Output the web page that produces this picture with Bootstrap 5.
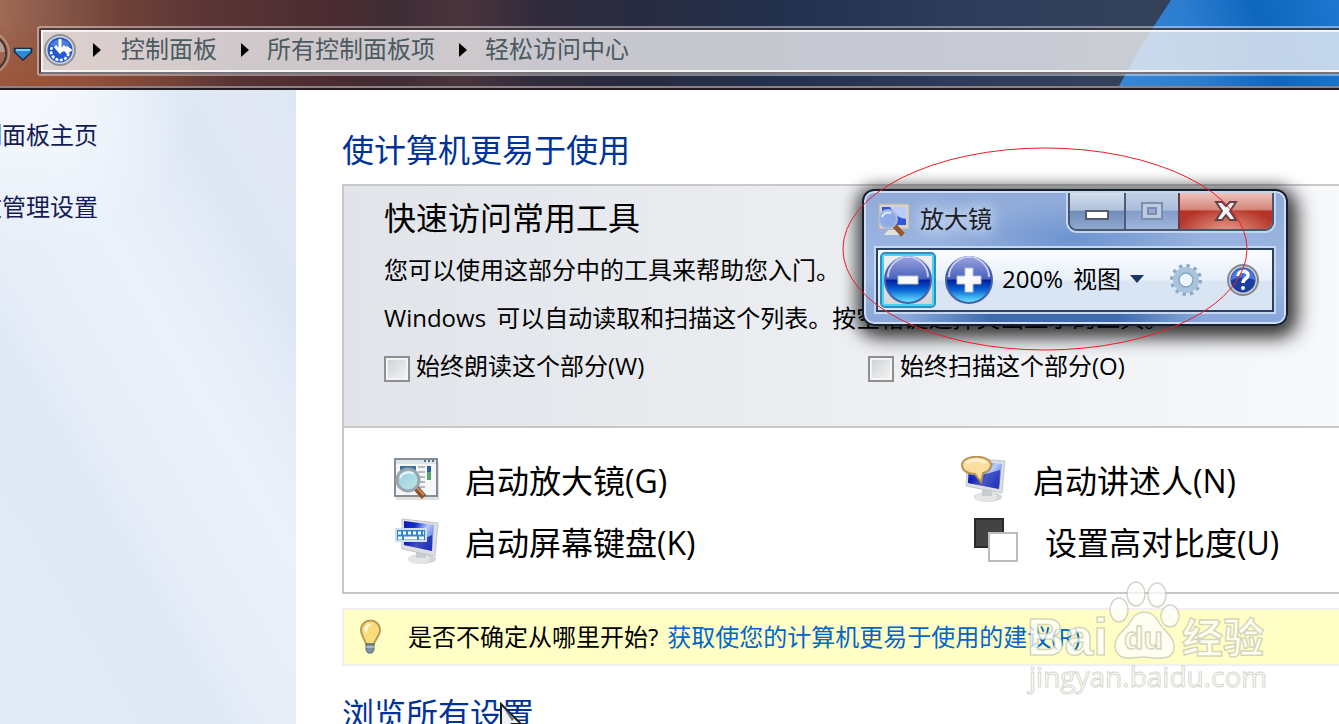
<!DOCTYPE html>
<html lang="zh-CN">
<head>
<meta charset="utf-8">
<meta name="viewport" content="width=device-width, initial-scale=1">
<title>轻松访问中心</title>
<link href="https://cdn.jsdelivr.net/npm/bootstrap@5.3.0/dist/css/bootstrap.min.css" rel="stylesheet">
<style>
  body { font-family: "Open Sans", "Noto Sans CJK SC", sans-serif; font-size: 24px; line-height: 48px; color: #000; background: #fff; }
  a { text-decoration: none; }
  .fs-title { font-size: 32px; line-height: 48px; }
  .ink-blue { color: #003399; }

  /* window frame */
  .glass { height: 90px; padding-top: 26px; border-bottom: 2px solid #231a22; box-shadow: inset 0 -2px #8d8283;
    background: radial-gradient(ellipse 200px 70px at 40px 90px, #9a5236 0, #9a523600), linear-gradient(90deg, #a06a54 0, #8a5a4a 50px, #6f4238 120px, #5c3636 200px, #4c2c30 320px, #3f2d35 400px, #4a343c 460px, #302b3c 540px, #272b40 640px, #22324f 800px, #2c3c5a 960px, #33415b 1120px); }
  .sky { width: 220px; height: 86px; background: linear-gradient(75deg, #3787d6 0, #2c7dd0 35%, #0e66bd 65%, #1e78cf 100%); clip-path: polygon(52px 0, 100% 0, 100% 100%, 0 100%, 24px 50%); }
  .addr { height: 50px; margin-left: 37px; border: 2px solid #ffffff66; border-right: 0; border-radius: 3px 0 0 3px; }
  .addr-in { height: 46px; border: 2px solid #40363ccc; border-bottom-color: #77737b; border-right: 0; border-radius: 2px 0 0 2px; }
  .addr-field { height: 42px; border: 2px solid #f6f3f3; border-right: 0; background: #efeff1cc; padding-bottom: 2px; }
  .addr a { color: #4b5a60; line-height: 36px; padding-bottom: 2px; }
  .addr a:first-of-type { margin-left: 20px; }
  .addr a:not(:first-of-type) { margin-left: 18px; }
  .sep { width: 8px; height: 14px; background: #000; clip-path: polygon(0 0, 100% 50%, 0 100%); }
  .nav-back { top: 30px; left: 0; }

  /* task pane */
  .side { flex: 0 0 296px; padding-top: 21px; background:
      radial-gradient(ellipse 180px 160px at 20px 0, #f7f9fe 0, #f7f9fe00),
      linear-gradient(60deg, #e2ecf8 0, #dee9f6 34%, #e6edf8 41%, #e9f1fa 60%, #e6edf8 70%, #dce7f4 81%, #e2e9f5 90%, #dde7f4 100%); }
  .side a { color: #151c55; margin-left: -46px; white-space: nowrap; margin-bottom: 24px; }

  /* content */
  .content { padding: 36px 0 0 46px; white-space: nowrap; }
  .quick { border: 2px solid #c8c8c8; border-right: 0; margin-top: 10px; }
  .quick-head { height: 242px; padding: 8px 0 0 40px; border-bottom: 2px solid #c8c8c8; background: linear-gradient(90deg, #e1e4e9 0, #ebedf1 460px, #f8f9fb 990px); }
  .half { flex: 0 0 484px; }
  .form-check-input.box { width: 26px; height: 26px; margin: 5px 2px 0 0; border: 2px solid #8e8f8f; border-radius: 0; background: linear-gradient(135deg, #cbcfd5, #f6f6f6) padding-box; box-shadow: inset 0 0 0 2px #f4f4f4; }
  .tools { height: 164px; padding: 22px 0 0 48px; }
  .tools a { color: #000; line-height: 62px; font-size: 32px; }
  .tools .tool-col { flex: 0 0 568px; }
  .tools svg { width: 48px; height: 48px; margin-right: 25px; margin-bottom: 2px; flex: none; }
  .tip { height: 58px; margin-top: 14px; background: #ffffc5; border: 2px solid #f0f0f0; border-right: 0; padding-left: 14px; }
  .tip svg { margin-right: 26px; }
  .tip a { color: #0066cc; margin-left: 9px; }

  /* magnifier window */
  .mag { top: 189px; left: 862px; width: 426px; height: 137px; border: 2px solid #17202e; border-radius: 12px;
    background: radial-gradient(ellipse 130px 40px at 210px 48px, #6d93cf, #6d93cf00), linear-gradient(90deg, #3d6bad00 10%, #3d6bad 30%, #3d6bad 60%, #3d6bad00 80%) 0 122px / 100% 10px no-repeat, linear-gradient(#90abd9, #9db8e2 60%, #87a7d9);
    box-shadow: inset 0 0 0 2px #cfdef3, 0 4px 16px 6px #0009, 8px 8px 22px 2px #0007; padding: 2px 12px 0; font-size: 24px; }
  .mag-bar { height: 55px; }
  .mag-name { line-height: 52px; text-shadow: 0 0 12px #dce7f8, 0 0 16px #dce7f8; color: #1a1e28; }
  .caps { height: 38px; border: 2px solid #48566e; border-top: 0; border-radius: 0 0 9px 9px; overflow: hidden; box-shadow: 0 0 0 2px #c4d5ee; }
  .caps button { border: 0; border-right: 2px solid #4e5d77; padding: 0; height: 36px; background: linear-gradient(#d3ddeb 0, #b0c2dc 48%, #6f8bb8 50%, #90a9cf); display: flex; align-items: center; justify-content: center; }
  .caps .cap-min { width: 56px; }
  .caps .cap-max { width: 54px; background: linear-gradient(#c1cfe4, #a9bedd 48%, #829cc7 50%, #a0b6da); border-right-color: #74383c; }
  .caps .cap-x { width: 92px; border: 0; background: radial-gradient(ellipse 50px 26px at 50% 110%, #e9a18d, #e9a18d00), linear-gradient(#edc4bc 0, #d6847a 46%, #b53326 50%, #b2382d 100%); }
  .mag-body { height: 64px; border: 2px solid #2c4160; box-shadow: 0 0 0 2px #c6d8f0; background: linear-gradient(#fafdff, #e8eff9 50%, #dae5f4 52%, #dae5f4); padding-left: 2px; }
  .mag-body button { border: 0; padding: 0; background: none; color: #000; line-height: 54px; }
  .mag-body span { line-height: 54px; padding-bottom: 2px; }
  .mag-body .btn-out { width: 56px; height: 56px; border: 2px solid #318dbd; border-radius: 5px; box-shadow: inset 0 0 0 2px #46d5f7; background: linear-gradient(#f0f0f0, #d4d4d4); display: flex; align-items: center; justify-content: center; }
  .mag-body .btn-view { margin-left: 10px; padding-bottom: 2px; }
  .ring { left: 842px; top: 146px; pointer-events: none; }
  .stamp { left: 1020px; top: 574px; pointer-events: none; }
  .pointer { left: 499px; top: 702px; }
</style>
</head>
<body>
<div class="vh-100 overflow-hidden position-relative d-flex flex-column">

  <header class="glass position-relative flex-shrink-0">
    <div class="sky position-absolute top-0 end-0"></div>
    <svg class="nav-back position-absolute" width="36" height="46" viewBox="0 0 36 46" aria-hidden="true">
      <circle cx="-12" cy="23" r="21" fill="none" stroke="#c0a298" stroke-width="2" opacity=".7"/>
      <circle cx="-12" cy="23" r="18" fill="#b89a8e" stroke="#3c3432" stroke-width="2"/>
      <path d="M-6 22H5L3 32L-2 36H-6z" fill="#9a644d"/>
      <path d="M14.500 18.500H31.500V22L23 30L14.500 22z" fill="#2a8cd8" stroke="#1b2b42" stroke-width="1.500"/>
      <path d="M16 20H30" stroke="#79d3f5" stroke-width="2"/>
    </svg>
    <div class="addr position-relative">
      <div class="addr-in">
        <nav class="addr-field d-flex align-items-center" aria-label="地址">
          <svg width="34" height="34" viewBox="0 0 34 34" aria-hidden="true">
            <circle cx="17" cy="17" r="15" fill="#d5d8dc" stroke="#8e9297" stroke-width="2"/>
            <circle cx="17" cy="17" r="12.500" fill="#2557cf"/>
            <path d="M7 12a11 9 0 0 1 20 0q-9 4-20 0" fill="#6e97ea" opacity=".6"/>
            <path d="M9 14a9 9 0 1 0 16 0" fill="none" stroke="#fff" stroke-width="2.500" stroke-dasharray="3 1.500"/>
            <path d="M17 6v11M12 13l5 6 5-6M17 17h9M23 14l4 3-4 3" fill="none" stroke="#fff" stroke-width="3"/>
          </svg>
          <span class="sep ms-3"></span>
          <a href="#">控制面板</a>
          <span class="sep ms-4"></span>
          <a href="#">所有控制面板项</a>
          <span class="sep ms-4"></span>
          <a href="#">轻松访问中心</a>
        </nav>
      </div>
    </div>
  </header>

  <div class="d-flex flex-grow-1">
    <nav class="side d-flex flex-column">
      <a href="#">控制面板主页</a>
      <a href="#">更改管理设置</a>
    </nav>

    <main class="content flex-grow-1 overflow-hidden">
      <h1 class="fs-title ink-blue fw-normal m-0">使计算机更易于使用</h1>

      <section class="quick">
        <div class="quick-head">
          <h2 class="fs-title fw-normal mb-1">快速访问常用工具</h2>
          <p class="m-0">您可以使用这部分中的工具来帮助您入门。</p>
          <p class="m-0"><span class="me-1">Windows</span> 可以自动读取和扫描这个列表。按空格键选择突出显示的工具。</p>
          <div class="d-flex">
            <div class="half d-flex align-items-center">
              <input class="form-check-input box" type="checkbox" id="read"><label class="ms-1" for="read">始终朗读这个部分(W)</label>
            </div>
            <div class="half d-flex align-items-center">
              <input class="form-check-input box" type="checkbox" id="scan"><label class="ms-1" for="scan">始终扫描这个部分(O)</label>
            </div>
          </div>
        </div>

        <div class="tools d-flex">
          <div class="tool-col">
            <a href="#" class="d-flex align-items-center">
              <svg viewBox="0 0 48 48" aria-hidden="true">
                <defs><linearGradient id="lens" x2="1" y2="1"><stop stop-color="#9dc7e8"/><stop offset="1" stop-color="#b9ecdd"/></linearGradient></defs>
                <path d="M4 6H47V44H4z" fill="#000" opacity=".12"/>
                <path d="M3 3H45V40H3z" fill="#f5f6f7" stroke="#858d96" stroke-width="2"/>
                <path d="M4 4H44V8H4z" fill="#dce3e9"/><path d="M32 5h2m2 0h2m2 0h2" stroke="#50779b" stroke-width="2"/>
                <path d="M8 10H24V24H8z" fill="#3a6f9a"/><path d="M35 10h4v6h-4z" fill="#2d5f9f"/><path d="M35 16h4v8h-4z" fill="#55a567"/>
                <path d="M26 11h7m-7 5h7m-7 5h7m-7 5h7m-7 5h7" stroke="#b5b9bd" stroke-width="2"/>
                <path d="M24 32L32 41" stroke="#8b4f2d" stroke-width="6"/><path d="M24 31L32 39" stroke="#c58a5b" stroke-width="2"/>
                <circle cx="16" cy="24" r="11" fill="url(#lens)" stroke="#9aa5ae" stroke-width="3"/>
                <path d="M8 22a9 8 0 0 1 14-4" stroke="#eaf7ff" stroke-width="2" fill="none"/>
              </svg>启动放大镜(G)</a>
            <a href="#" class="d-flex align-items-center">
              <svg viewBox="0 0 48 48" aria-hidden="true">
                <defs><linearGradient id="scr" x2="1" y2=".6"><stop stop-color="#0a18b8"/><stop offset=".35" stop-color="#1230c8"/><stop offset=".65" stop-color="#b9cdf9"/><stop offset="1" stop-color="#5a76e0"/></linearGradient></defs>
                <ellipse cx="30" cy="41" rx="14" ry="5" fill="#d3d5d8"/><ellipse cx="27" cy="41" rx="11" ry="5" fill="#e3e5e7"/>
                <path d="M24 32l10 2v6h-10z" fill="#c9ccd0"/>
                <path d="M10 1L46 5L43 38L10 31z" fill="#dcdee1" stroke="#c4c6ca"/>
                <path d="M12 3L42 7L40 33L12 27z" fill="url(#scr)"/><path d="M12 24q16-1 28-7l0 16-28-6z" fill="#0d17a8" opacity=".7"/>
                <path d="M4 11H34V23H4z" fill="#2f87d2" stroke="#d0ddea" stroke-width="2"/>
                <path d="M6 15H32" stroke="#fff" stroke-width="3" stroke-dasharray="3 2"/>
                <path d="M6 20H10M12 20H25M27 20H32" stroke="#fff" stroke-width="3"/>
              </svg>启动屏幕键盘(K)</a>
          </div>
          <div class="tool-col">
            <a href="#" class="d-flex align-items-center">
              <svg viewBox="0 0 48 48" aria-hidden="true">
                <ellipse cx="28" cy="41" rx="14" ry="5" fill="#d3d5d8"/><ellipse cx="26" cy="41" rx="11" ry="5" fill="#e3e5e7"/>
                <path d="M22 32l10 2v6h-10z" fill="#c9ccd0"/>
                <path d="M8 2L45 5L42 37L6 30z" fill="#dcdee1" stroke="#c4c6ca"/>
                <path d="M9 5L42 8L39 33L8 27z" fill="url(#scr)"/><path d="M8 23l32-9-1 19-31-6z" fill="#0d17a8" opacity=".65"/>
                <path d="M2 9C2-2 31-2 31 9c0 5-4 7-8 8l-2 9-6-8C7 18 2 14 2 9z" fill="#fbdda0" stroke="#b99655" stroke-width="2"/>
                <path d="M6 7q10-6 20 0" stroke="#fff2d2" stroke-width="3" fill="none"/>
              </svg>启动讲述人(N)</a>
            <a href="#" class="d-flex align-items-center ps-2">
              <svg class="ms-1" viewBox="0 0 48 48" aria-hidden="true">
                <path d="M3 1H31V29H3z" fill="#434343" stroke="#2a2a2a" stroke-width="2"/>
                <path d="M17 15H45V43H17z" fill="#fff" stroke="#bcbcbc" stroke-width="2"/>
              </svg>设置高对比度(U)</a>
          </div>
        </div>
      </section>

      <section class="tip d-flex align-items-center">
        <svg width="24" height="36" viewBox="0 0 24 36" aria-hidden="true">
          <path d="M8 25C7 20 3 17 3 11a9.500 9.500 0 0 1 19 0c0 6-5 9-6 14z" fill="#fbdc7c" stroke="#b09a5b" stroke-width="2"/>
          <path d="M6 11q1-7 8-6-6 3-5 10z" fill="#fffbe5"/>
          <path d="M8 25H16V31L14 34H10L8 31z" fill="#7d93a2" stroke="#526570"/><path d="M8 28h8" stroke="#d5e0e5"/>
        </svg>
        <span>是否不确定从哪里开始?</span><a href="#">获取使您的计算机更易于使用的建议(R)</a>
      </section>

      <h2 class="fs-title ink-blue fw-normal mt-4 mb-0">浏览所有设置</h2>
    </main>
  </div>

  <!-- floating magnifier -->
  <section class="mag position-absolute" aria-label="放大镜">
    <div class="mag-bar d-flex align-items-start">
      <svg class="mt-2 me-2" width="36" height="38" viewBox="0 0 36 38" aria-hidden="true">
        <path d="M3 3H33V28H3z" fill="#d6d3cc" stroke="#b5b2aa"/><path d="M6 6H30V24H6z" fill="#3454d7"/><path d="M14 6H30V18q-9 0-16-12z" fill="#bccafa"/>
        <path d="M12 29H25L29 34H8z" fill="#e1e0db"/>
        <path d="M18 24L27 34" stroke="#8e5a36" stroke-width="5"/>
        <circle cx="12" cy="18" r="9" fill="#8faae9" stroke="#a9bbdc" stroke-width="2"/><path d="M6 16q3-6 9-4" stroke="#e0eaff" stroke-width="2" fill="none"/>
      </svg>
      <span class="mag-name">放大镜</span>
      <div class="caps d-flex ms-auto">
        <button class="cap-min" aria-label="最小化"><svg width="26" height="12" viewBox="0 0 26 12" class="mt-2"><path d="M2 2H24V10H2z" fill="#fff" stroke="#545e70" stroke-width="2"/></svg></button>
        <button class="cap-max" aria-label="最大化"><svg width="24" height="20" viewBox="0 0 24 20"><path d="M2 2H22V18H2z" fill="#bccbe1" stroke="#7c8fb0" stroke-width="2"/><path d="M8 7H16V13H8z" fill="#97acd0" stroke="#7c8fb0" stroke-width="2"/></svg></button>
        <button class="cap-x" aria-label="关闭"><svg width="24" height="22" viewBox="0 0 24 22"><path d="M2 2H8L12 6L16 2H22L16 11L22 20H16L12 15L8 20H2L8 11z" fill="#f5f5f5" stroke="#65424a" stroke-width="2"/></svg></button>
      </div>
    </div>
    <div class="mag-body d-flex align-items-center">
      <button class="btn-out" aria-label="缩小">
        <svg width="50" height="50" viewBox="0 0 50 50">
          <defs>
            <linearGradient id="orb" x2="0" y2="1"><stop stop-color="#9ba3dd"/><stop offset=".48" stop-color="#4660bd"/><stop offset=".5" stop-color="#021c9c"/><stop offset=".72" stop-color="#0965d6"/><stop offset="1" stop-color="#6cf2ff"/></linearGradient>
          </defs>
          <circle cx="25" cy="25" r="23" fill="url(#orb)" stroke="#465fb0" stroke-width="2"/>
          <path d="M5 22a20 20 0 0 1 40 0" fill="none" stroke="#c7d0f4" stroke-width="2"/>
          <path d="M15 21H35V29H15z" fill="#fafafa" stroke="#b9bfcc"/>
        </svg>
      </button>
      <button class="ms-2 d-flex" aria-label="放大">
        <svg width="50" height="50" viewBox="0 0 50 50">
          <circle cx="25" cy="25" r="23" fill="url(#orb)" stroke="#465fb0" stroke-width="2"/>
          <path d="M5 22a20 20 0 0 1 40 0" fill="none" stroke="#c7d0f4" stroke-width="2"/>
          <path d="M21 13H29V21H37V29H29V37H21V29H13V21H21z" fill="#fafafa" stroke="#b9bfcc"/>
        </svg>
      </button>
      <span class="ms-2">200%</span>
      <button class="btn-view d-flex align-items-center">视图
        <svg class="ms-2" width="16" height="10" viewBox="0 0 16 10" aria-hidden="true"><path d="M1 1H15L8 9z" fill="#1b3a60"/></svg>
      </button>
      <button class="ms-4 d-flex" aria-label="选项">
        <svg width="34" height="34" viewBox="0 0 34 34">
          <circle cx="17" cy="17" r="14" fill="none" stroke="#8aa9c6" stroke-width="4" stroke-dasharray="3.300 4.030"/>
          <circle cx="17" cy="17" r="10" fill="none" stroke="#a9c4dc" stroke-width="6"/>
          <circle cx="17" cy="17" r="7" fill="#edf4fb" stroke="#86a5c2" stroke-width="1.500"/>
        </svg>
      </button>
      <button class="ms-auto me-2 d-flex" aria-label="帮助">
        <svg class="me-1" width="34" height="34" viewBox="0 0 34 34">
          <circle cx="17" cy="17" r="15" fill="#ccd0d4" stroke="#85898f" stroke-width="2"/>
          <circle cx="17" cy="17" r="12.500" fill="#1c3f9f"/><path d="M5 17a12 12 0 0 1 24 0q-12-5-24 0" fill="#4c74d6"/>
          <path d="M12 13c0-6 10-6 10-1 0 4-5 3-5 8" fill="none" stroke="#fff" stroke-width="3.500"/><circle cx="17" cy="25" r="2" fill="#fff"/>
        </svg>
      </button>
    </div>
  </section>

  <svg class="ring position-absolute" width="406" height="206" viewBox="0 0 406 206" aria-hidden="true">
    <ellipse cx="203" cy="103" rx="202" ry="101" fill="none" stroke="#ed1c24"/>
  </svg>

  <svg class="pointer position-absolute" width="24" height="34" viewBox="0 0 24 34" aria-hidden="true">
    <path d="M2 2L22 22H13L18 32L13 33L9 24L2 30z" fill="#eef2f6" stroke="#17202b" stroke-width="2"/>
    <path d="M4 5L15 17L13 19z" fill="#64717f"/>
  </svg>

  <svg class="stamp position-absolute" width="260" height="130" viewBox="0 0 260 130" aria-label="Baidu经验">
    <g fill="#fff" fill-opacity=".75" stroke="#b9b9a8" stroke-opacity=".6" stroke-width="1.500">
      <ellipse cx="99" cy="36" rx="9" ry="12"/><ellipse cx="116" cy="20" rx="9" ry="12"/><ellipse cx="137" cy="21" rx="9" ry="12"/><ellipse cx="150" cy="42" rx="9" ry="11"/>
      <path d="M124 38c-8 0-12 6-15 12-4 6-14 11-14 22 0 7 5 12 13 12 6 0 10-1 16-1s12 2 18 1c8 0 13-5 12-13-1-10-10-14-14-21-3-6-8-12-16-12z"/>
      <text x="7" y="81" font-family="Liberation Sans, sans-serif" font-weight="700" font-size="52">Bai</text>
      <text x="104" y="75" font-family="Liberation Sans, sans-serif" font-weight="700" font-size="32" fill="#fffde0">du</text>
      <text x="162" y="79" font-family="Noto Sans CJK SC, sans-serif" font-weight="700" font-size="41">经验</text>
      <text x="9" y="113" font-family="Open Sans, sans-serif" font-size="28" stroke-width="1">jingyan.baidu.com</text>
    </g>
  </svg>
</div>
<script src="https://cdn.jsdelivr.net/npm/bootstrap@5.3.0/dist/js/bootstrap.bundle.min.js"></script>
</body>
</html>
